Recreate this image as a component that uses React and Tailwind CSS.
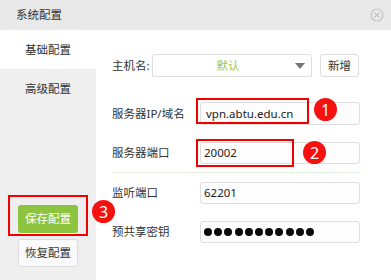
import React from "react";

const font = { fontFamily: '"Noto Sans", "Noto Sans CJK SC", sans-serif' };

function Badge({ n, className }) {
  return (
    <div
      className={`absolute w-[23px] h-[23px] rounded-full bg-[#f5110f] text-white flex items-center justify-center text-[16px] leading-none ${className}`}
    >
      {n}
    </div>
  );
}

function Field({ label, children, h = "h-[23px]" }) {
  return (
    <div className={`flex items-center ${h}`}>
      <div className="w-[88px] text-[11.5px] text-[#333]">{label}</div>
      <div className="w-[160px] h-full border border-[#dedede] rounded-[3px] bg-[#fdfdfd] flex items-center px-[2px] text-[11.5px] text-[#222]">
        {children}
      </div>
    </div>
  );
}

export default function App() {
  return (
    <div className="relative w-[391px] h-[280px] bg-white overflow-hidden" style={font}>
      <div className="h-[30px] bg-[#e9e9e9] flex items-center justify-between pl-[16px] pr-[7px]">
        <span className="text-[11.5px] text-[#333]">系统配置</span>
        <svg width="14" height="14" viewBox="0 0 14 14">
          <circle cx="7" cy="7" r="6" fill="none" stroke="#c4c4c4" strokeWidth="1.2" />
          <path d="M4.5 4.5 L9.5 9.5 M9.5 4.5 L4.5 9.5" stroke="#c4c4c4" strokeWidth="1.2" />
        </svg>
      </div>
      <div className="flex h-[250px]">
        <div className="w-[96px] flex flex-col">
          <div className="h-[39px] bg-white flex items-center justify-center text-[11.5px] text-[#333]">基础配置</div>
          <div className="flex-1 bg-[#efefef] flex flex-col items-center">
            <div className="h-[39px] w-full flex items-center justify-center text-[11.5px] text-[#333]">高级配置</div>
            <div className="flex-1" />
            <div className="w-[60px] h-[28px] rounded-[3px] bg-[#8cc33f] text-white text-[11.5px] flex items-center justify-center">保存配置</div>
            <div className="w-[60px] h-[28px] mt-[6px] mb-[13px] rounded-[3px] bg-[#fafafa] border border-[#dcdcdc] text-[#333] text-[11.5px] flex items-center justify-center">恢复配置</div>
          </div>
        </div>
        <div className="flex-1 bg-white pl-[16px] pt-[24px]">
          <div className="flex items-center h-[23px]">
            <div className="w-[40px] text-[11.5px] text-[#333]">主机名:</div>
            <div className="w-[160px] h-full border border-[#dedede] rounded-[2px] bg-white flex items-center relative">
              <span className="flex-1 text-center pr-[8px] text-[11.5px] text-[#96c85a]">默认</span>
              <svg className="absolute right-[6px] top-[8px]" width="10" height="6" viewBox="0 0 10 6">
                <path d="M0 0 H10 L5 6 Z" fill="#777" />
              </svg>
            </div>
            <div className="ml-[8px] w-[39px] h-full border border-[#dedede] rounded-[3px] bg-white flex items-center justify-center text-[11.5px] text-[#333]">新增</div>
          </div>
          <div className="mt-[25px]">
            <Field label="服务器IP/域名">
              <span className="pl-[3px]">vpn.abtu.edu.cn</span>
            </Field>
          </div>
          <div className="mt-[17px]">
            <Field label="服务器端口" h="h-[22px]">
              <span className="pl-[1px]">20002</span>
            </Field>
          </div>
          <div className="mt-[8px] h-px w-[248px] bg-[#dff0df]" />
          <div className="mt-[9px]">
            <Field label="监听端口" h="h-[22px]">
              <span className="pl-[1px]">62201</span>
            </Field>
          </div>
          <div className="mt-[17px]">
            <Field label="预共享密钥" h="h-[22px]">
              <div className="flex gap-[2.2px] pl-[1px]">
                {Array.from({ length: 11 }).map((_, i) => (
                  <div key={i} className="w-[8px] h-[8px] rounded-full bg-[#0a0a0a]" />
                ))}
              </div>
            </Field>
          </div>
        </div>
      </div>

      <div className="absolute left-[196px] top-[98px] w-[113px] h-[26px] border-2 border-[#f20000]" />
      <div className="absolute left-[196px] top-[139px] w-[98px] h-[28px] border-2 border-[#f20000]" />
      <div className="absolute left-[8px] top-[195px] w-[80px] h-[41px] border-2 border-[#f20000]" />
      <Badge n="1" className="left-[314px] top-[98px]" />
      <Badge n="2" className="left-[303px] top-[141px]" />
      <Badge n="3" className="left-[92px] top-[200px]" />
    </div>
  );
}
